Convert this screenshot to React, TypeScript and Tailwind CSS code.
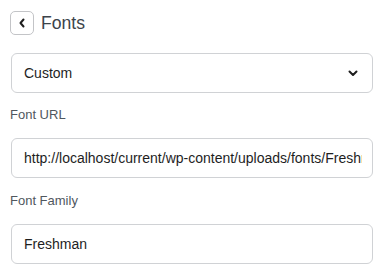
import React from "react";

export default function App() {
  return (
    <div className="w-[383px] h-[274px] bg-white pl-[10px] pr-[10px] pt-[11px] font-['Liberation_Sans',Arial,sans-serif]">
      <div className="flex items-center h-[24px]">
        <button className="w-[24px] h-[24px] rounded-[5px] border border-[#c3c4c7] bg-white flex items-center justify-center">
          <svg width="8" height="10" viewBox="0 0 8 10" fill="none">
            <path d="M5.5 1.5 L2.5 5 L5.5 8.5" stroke="#1e1e1e" strokeWidth="2" strokeLinecap="round" strokeLinejoin="round" />
          </svg>
        </button>
        <span className="ml-[7px] text-[17.6px] leading-[24px] text-[#3c434a]">Fonts</span>
      </div>

      <div className="mt-[18px] ml-[1px] w-[362px] h-[40px] rounded-[6px] border border-[#d0d2d5] bg-white flex items-center justify-between pl-[12px] pr-[14px]">
        <span className="text-[14px] text-[#1e1e1e]">Custom</span>
        <svg width="10" height="7" viewBox="0 0 10 7" fill="none">
          <path d="M1.5 1.5 L5 5 L8.5 1.5" stroke="#1e1e1e" strokeWidth="2" strokeLinecap="round" strokeLinejoin="round" />
        </svg>
      </div>

      <div className="mt-[14px] text-[13px] leading-[16px] text-[#50575e]">Font URL</div>
      <div className="mt-[15px] ml-[1px] w-[362px] h-[40px] rounded-[6px] border border-[#d0d2d5] bg-white flex items-center pl-[12px]">
        <div className="w-[338px] overflow-hidden whitespace-nowrap text-[14px] text-[#1e1e1e]">
          http://localhost/current/wp-content/uploads/fonts/Freshman.woff
        </div>
      </div>

      <div className="mt-[15px] text-[13px] leading-[16px] text-[#50575e]">Font Family</div>
      <div className="mt-[15px] ml-[1px] w-[362px] h-[40px] rounded-[6px] border border-[#d0d2d5] bg-white flex items-center pl-[12px] pr-[10px]">
        <span className="text-[14px] text-[#1e1e1e]">Freshman</span>
      </div>
    </div>
  );
}
